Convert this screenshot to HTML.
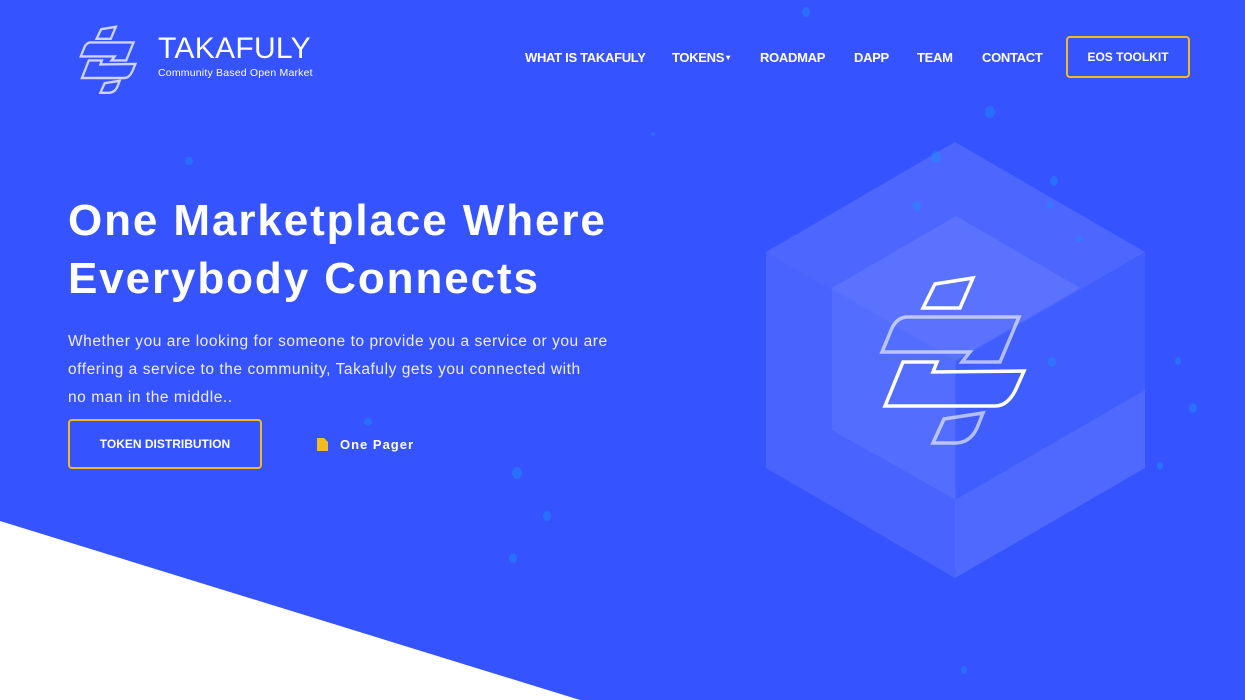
<!DOCTYPE html>
<html><head><meta charset="utf-8"><style>
*{margin:0;padding:0;box-sizing:border-box}
body{width:1245px;height:700px;overflow:hidden;background:#3553fe;font-family:"Liberation Sans",sans-serif;color:#fff;position:relative}
.nav a{position:absolute;top:50px;font-size:13px;font-weight:bold;color:#fff;text-decoration:none;letter-spacing:-0.3px}
.eos{position:absolute;left:1066px;top:36px;width:124px;height:42px;border:2px solid #f5b921;border-radius:4px;font-size:12px;font-weight:bold;text-align:center;line-height:38px}
h1{position:absolute;left:68px;top:192px;font-size:44px;line-height:58px;font-weight:bold;letter-spacing:1.9px;white-space:nowrap}
p.lead{position:absolute;left:68px;top:328px;font-size:15.5px;line-height:28px;color:#eef;letter-spacing:0.55px;white-space:nowrap}
.btn{position:absolute;left:68px;top:419px;width:194px;height:50px;border:2px solid #f5b921;border-radius:4px;font-size:12px;font-weight:bold;text-align:center;line-height:46px}
.pager{position:absolute;left:340px;top:437px;font-size:13px;font-weight:bold;letter-spacing:1px}
</style></head><body>
<svg width="1245" height="700" style="position:absolute;left:0;top:0">
<g fill="#fff">
<polygon points="955,142 1145,252 955,362 766,252" fill-opacity="0.12"/>
<polygon points="766,252 955,362 955,578 766,468" fill-opacity="0.1"/>
<polygon points="1145,252 955,362 955,578 1145,468" fill-opacity="0.06"/>
<polygon points="956,216 1080,288 956,360 832,288" fill-opacity="0.08"/>
<polygon points="832,288 956,360 956,500 832,430" fill-opacity="0.06"/>
<polygon points="955,500 1145,390 1145,468 955,578" fill-opacity="0.08"/>
</g>
<g fill="none" stroke-width="3.5" stroke-linejoin="miter">
<polygon points="923,308 935,284 973,278 960,308" stroke="#fff"/>
<path d="M882,352 L892,328 Q897,318 906,317 L1019,317 L1000,362 L962,362 L970,352 Z" stroke="#fff" stroke-opacity="0.6"/>
<path d="M885,406 L903,362 L937,362 L933,372 L1024,371 L1016,389 Q1008,406 995,406 Z" stroke="#fff"/>
<path d="M933,443 L944,419 L983,413 L977,428 Q970,443 955,443 Z" stroke="#fff" stroke-opacity="0.6"/>
</g>
<g fill="#1e8cff" fill-opacity="0.5">
<ellipse cx="806" cy="12" rx="4" ry="5"/><ellipse cx="990" cy="112" rx="5" ry="6"/><ellipse cx="936" cy="157" rx="5" ry="6"/>
<ellipse cx="917" cy="206" rx="4" ry="5"/><ellipse cx="1054" cy="181" rx="4" ry="5"/><ellipse cx="1050" cy="205" rx="3" ry="4"/>
<ellipse cx="1079" cy="239" rx="3" ry="3"/><ellipse cx="1052" cy="362" rx="4" ry="5"/><ellipse cx="1193" cy="408" rx="4" ry="5"/>
<ellipse cx="1178" cy="361" rx="3" ry="4"/><ellipse cx="189" cy="161" rx="4" ry="4"/><ellipse cx="517" cy="473" rx="5" ry="6"/>
<ellipse cx="547" cy="516" rx="4" ry="5"/><ellipse cx="513" cy="558" rx="4" ry="5"/><ellipse cx="368" cy="422" rx="4" ry="4"/>
<ellipse cx="1160" cy="466" rx="3" ry="4"/><ellipse cx="964" cy="670" rx="3" ry="4"/><ellipse cx="653" cy="134" rx="2" ry="2"/>
</g>
<polygon points="0,521 580,700 0,700" fill="#fff"/>
<g transform="translate(80,26) scale(0.385,0.4) translate(-880,-276)" fill="none" stroke-width="6" stroke="#fff" stroke-opacity="0.75">
<polygon points="923,308 935,284 973,278 960,308"/>
<path d="M882,352 L892,328 Q897,318 906,317 L1019,317 L1000,362 L962,362 L970,352 Z"/>
<path d="M885,406 L903,362 L937,362 L933,372 L1024,371 L1016,389 Q1008,406 995,406 Z"/>
<path d="M933,443 L944,419 L983,413 L977,428 Q970,443 955,443 Z"/>
</g>
</svg>
<div style="position:absolute;left:158px;top:32px;font-size:30px;letter-spacing:0.3px">TAKAFULY</div>
<div style="position:absolute;left:158px;top:67px;font-size:10.5px;letter-spacing:0.2px">Community Based Open Market</div>
<div class="nav">
<a style="left:525px">WHAT IS TAKAFULY</a>
<a style="left:672px">TOKENS<span style="font-size:8px;vertical-align:2px"> ▾</span></a>
<a style="left:760px">ROADMAP</a>
<a style="left:854px">DAPP</a>
<a style="left:917px">TEAM</a>
<a style="left:982px">CONTACT</a>
</div>
<div class="eos">EOS TOOLKIT</div>
<h1>One Marketplace Where<br>Everybody Connects</h1>
<p class="lead">Whether you are looking for someone to provide you a service or you are<br>offering a service to the community, Takafuly gets you connected with<br>no man in the middle..</p>
<div class="btn">TOKEN DISTRIBUTION</div>
<svg style="position:absolute;left:317px;top:438px" width="11" height="13"><path d="M0,0 H7 L11,4 V13 H0 Z" fill="#f5b921"/></svg>
<div class="pager">One Pager</div>
</body></html>
